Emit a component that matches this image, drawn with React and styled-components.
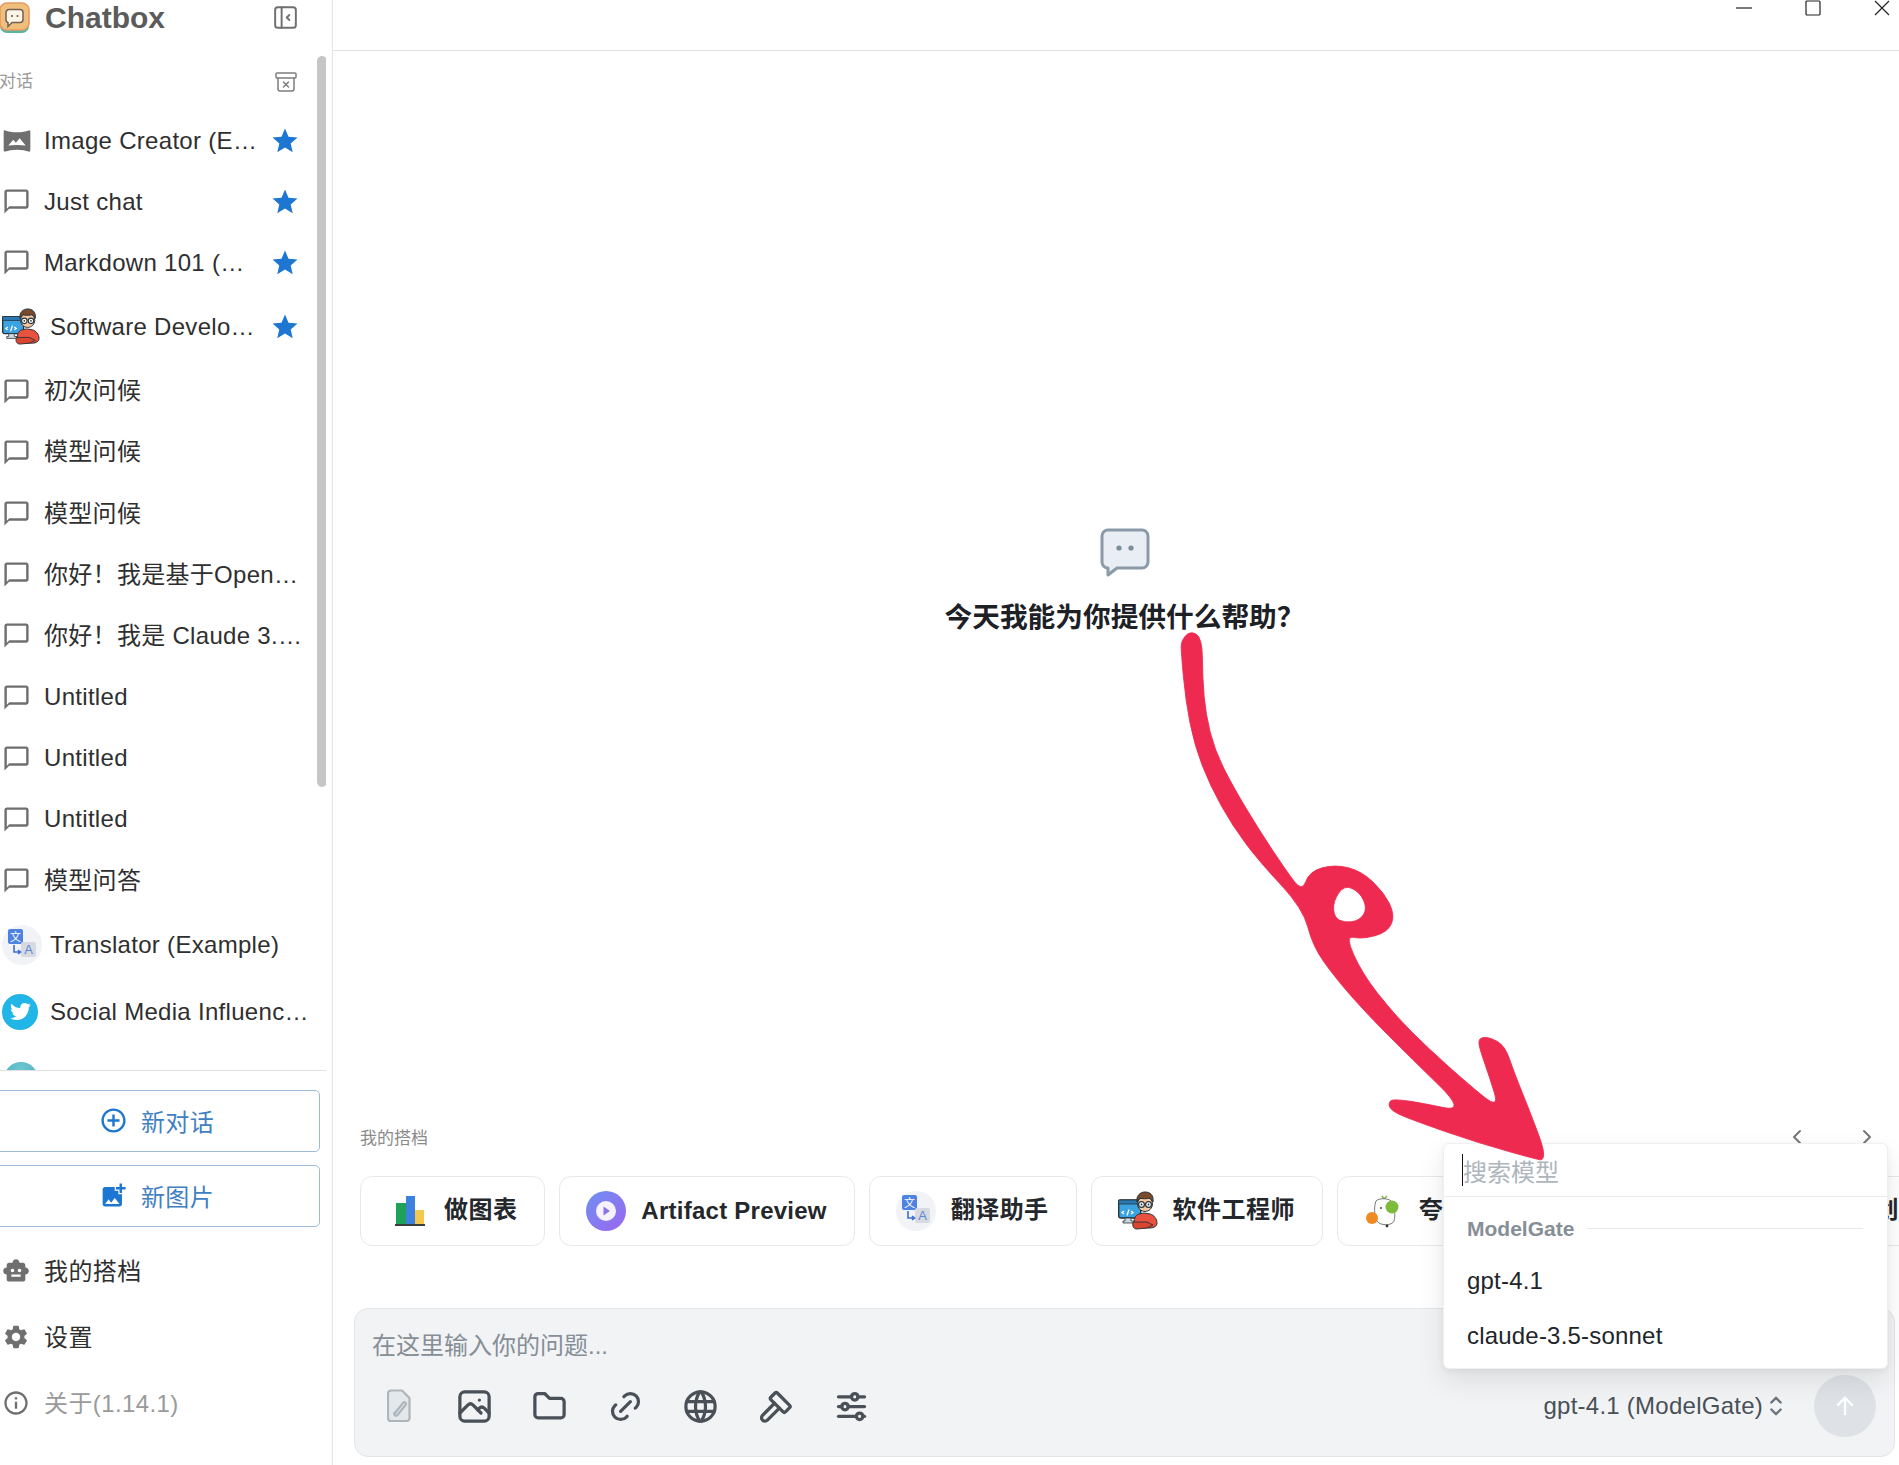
import React from 'react';
import styled, { createGlobalStyle } from 'styled-components';
import { MdOutlineChatBubbleOutline, MdStar, MdVrpano, MdSmartToy, MdSettings, MdInfoOutline, MdAddCircleOutline, MdAddPhotoAlternate } from 'react-icons/md';
import { TbLayoutSidebarLeftCollapse, TbPhoto, TbFolder, TbLink, TbWorld, TbHammer, TbAdjustmentsHorizontal, TbSelector, TbArrowUp, TbChevronLeft, TbChevronRight } from 'react-icons/tb';
import { FaTwitter } from 'react-icons/fa';
import { ArchiveX } from 'lucide-react';

const FONT = '"Liberation Sans", "Noto Sans CJK SC", sans-serif';

const Global = createGlobalStyle`
  html, body { margin: 0; padding: 0; background: #fff; }
  body { font-family: ${FONT}; overflow: hidden; }
  * { box-sizing: border-box; }
`;

const Page = styled.div`
  position: relative;
  display: flex;
  width: 1899px;
  height: 1465px;
  overflow: hidden;
  background: #fff;
`;

/* ---------- Sidebar ---------- */
const Sidebar = styled.aside`
  flex: 0 0 333px;
  height: 100%;
  display: flex;
  flex-direction: column;
  border-right: 1px solid #e3e3e3;
`;
const Brand = styled.header`
  flex: 0 0 56px;
  display: flex;
  align-items: flex-start;
  padding-top: 2px;
`;
const BrandName = styled.h1`
  margin: -3px 0 0 15px;
  font-size: 30px;
  line-height: 37px;
  font-weight: 700;
  color: #5b5b5b;
`;
const CollapseButton = styled.span`
  margin: 0 0 0 auto;
  padding-right: 31px;
  color: #6f6f6f;
  display: flex;
  font-size: 31px;
  svg { stroke-width: 1.5; }
`;
const Scroller = styled.div`
  position: relative;
  flex: 1;
  min-height: 0;
  overflow: hidden;
  margin-right: 6px;
`;
const ScrollThumb = styled.div`
  position: absolute;
  top: 0;
  left: 317px;
  width: 10px;
  height: 731px;
  border-radius: 5px;
  background: #c6c6c6;
`;
const SectionHead = styled.div`
  height: 54px;
  display: flex;
  align-items: flex-start;
  justify-content: space-between;
  padding: 14px 29px 0 0;
  margin-left: -1px;
`;
const SectionLabel = styled.span`
  font-size: 17px;
  line-height: 24px;
  color: #9a9a9a;
`;
const ArchiveIcon = styled(ArchiveX)`
  width: 24px;
  height: 24px;
  color: #7d7d7d;
  margin-right: -1px;
`;
const SessionList = styled.ul`
  list-style: none;
  margin: 0;
  padding: 0;
`;
const Session = styled.li`
  display: flex;
  align-items: center;
  height: ${p => (p.$avatar ? '67px' : '61.2px')};
  width: ${p => (p.$avatar ? '312px' : '306px')};
  margin-left: 2px;
`;
const SessionIconBox = styled.span`
  flex: 0 0 ${p => (p.$avatar ? '48px' : '42px')};
  display: flex;
  align-items: center;
  font-size: ${p => (p.$wide ? '32px' : '29px')};
  margin-left: ${p => (p.$wide ? '-1px' : '0')};
  margin-right: ${p => (p.$wide ? '1px' : '0')};
  color: #6f6f6f;
`;
const SessionTitle = styled.span`
  flex: 1;
  min-width: 0;
  font-size: 24px;
  line-height: 30px;
  letter-spacing: 0.3px;
  color: #2f2f2f;
  white-space: nowrap;
  overflow: hidden;
  text-overflow: ellipsis;
`;
const StarIcon = styled(MdStar)`
  flex: 0 0 30px;
  width: 30px;
  height: 30px;
  margin: 0 ${p => (p.$wide ? '14px' : '8px')} 0 10px;
  color: #1c76d2;
`;
const SidebarFoot = styled.div`
  flex: 0 0 auto;
  height: 395px;
  border-top: 1px solid #e0e0e0;
  margin-right: 6px;
  padding-top: 19px;
`;
const ActionStack = styled.div`
  display: flex;
  flex-direction: column;
  gap: 13px;
  margin: 0 0 9px -7px;
`;
const ActionButton = styled.button`
  display: flex;
  align-items: center;
  justify-content: center;
  gap: 13px;
  width: 327px;
  height: 62px;
  padding: 0 0 2px;
  background: #fff;
  border: 1px solid #9bbbd8;
  border-radius: 5px;
  font-family: ${FONT};
  font-size: 24px;
  letter-spacing: 0.3px;
  color: #3f80c2;
  svg { font-size: 29px; color: #1c76d2; }
`;
const NavItem = styled.div`
  display: flex;
  align-items: center;
  height: 66px;
  margin-left: 2px;
  font-size: 24px;
  letter-spacing: 0.4px;
  color: ${p => (p.$muted ? '#9a9a9a' : '#2f2f2f')};
  svg { flex: 0 0 28px; width: 28px; height: 28px; color: #6f6f6f; margin-right: 14px; margin-top: 3px; }
`;

/* ---------- Main ---------- */
const Main = styled.main`
  flex: 1;
  min-width: 0;
  display: flex;
  flex-direction: column;
  height: 100%;
`;
const TitleBar = styled.div`
  flex: 0 0 51px;
  border-bottom: 1px solid #e2e2e2;
  display: flex;
  justify-content: flex-end;
  align-items: flex-start;
  padding-right: 9px;
  gap: 53px;
`;
const WinButton = styled.svg`
  width: 16px;
  height: 16px;
  display: block;
  fill: none;
  stroke: #222;
  stroke-width: 1.2;
`;
const Hero = styled.section`
  flex: 1;
  display: flex;
  flex-direction: column;
  align-items: center;
  padding-top: 477px;
`;
const HeroIcon = styled.svg`
  width: 50px;
  height: 49px;
  margin-left: 17px;
`;
const HeroTitle = styled.h2`
  margin: 21px 0 0 17px;
  font-size: 27.7px;
  line-height: 40px;
  font-weight: 700;
  color: #1d2125;
`;
const Personas = styled.section`
  flex: 0 0 auto;
  padding-left: 27px;
`;
const PersonasHead = styled.div`
  display: flex;
  align-items: center;
  justify-content: space-between;
  height: 24px;
  padding-right: 20px;
  font-size: 17px;
  color: #8b8b8b;
`;
const Pager = styled.div`
  display: flex;
  gap: 46px;
  font-size: 24px;
  color: #777;
  margin-top: 2px;
  svg { display: block; }
`;
const CardRow = styled.div`
  display: flex;
  gap: 14px;
  margin-top: 28px;
  overflow: hidden;
`;
const Card = styled.div`
  flex: 0 0 auto;
  display: flex;
  align-items: center;
  gap: 15px;
  height: 70px;
  padding: 0 27px 0 ${p => p.$pad || 26}px;
  border: 1px solid #e7e8ea;
  border-radius: 12px;
  background: #fff;
`;
const CardName = styled.span`
  font-size: 24px;
  line-height: 30px;
  font-weight: 700;
  letter-spacing: ${p => (p.$latin ? '0.25px' : '0.45px')};
  color: #24272b;
  white-space: nowrap;
  padding-bottom: ${p => (p.$latin ? '0' : '2px')};
`;
const Composer = styled.section`
  flex: 0 0 149px;
  margin: 62px 4px 8px 21px;
  padding: 21px 18px 19px 17px;
  display: flex;
  flex-direction: column;
  background: #f1f3f5;
  border: 1px solid #e3e5e8;
  border-radius: 14px;
`;
const Placeholder = styled.div`
  font-size: 24px;
  line-height: 32px;
  color: #868e96;
`;
const ToolRow = styled.div`
  display: flex;
  align-items: center;
  margin-top: auto;
`;
const ToolGroup = styled.div`
  display: flex;
  align-items: center;
  padding-left: 12px;
  gap: 45.4px;
`;
const Tool = styled.span`
  display: flex;
  width: 30px;
  height: 32px;
  align-items: center;
  justify-content: center;
  font-size: 39px;
  color: ${p => (p.$disabled ? '#adb5bd' : '#495057')};
  svg { flex: none; }
`;
const ModelPicker = styled.div`
  margin-left: auto;
  display: flex;
  align-items: center;
  font-size: 24px;
  letter-spacing: 0.25px;
  color: #495057;
  svg { font-size: 28px; margin-left: -1px; color: #6b737b; }
`;
const SendButton = styled.span`
  flex: 0 0 62px;
  height: 62px;
  margin-left: 24px;
  border-radius: 50%;
  background: #dee2e6;
  color: #fff;
  display: flex;
  align-items: center;
  justify-content: center;
  font-size: 28px;
`;

/* ---------- Popover ---------- */
const Popover = styled.div`
  position: absolute;
  left: 1443px;
  top: 1143px;
  width: 445px;
  height: 226px;
  background: #fff;
  border: 1px solid #eff0f1;
  border-radius: 6px;
  box-shadow: 0 12px 28px rgba(0, 0, 0, 0.09), 0 2px 6px rgba(0, 0, 0, 0.05);
  z-index: 5;
`;
const SearchRow = styled.div`
  display: flex;
  align-items: flex-start;
  height: 53px;
  padding-left: 18px;
  border-bottom: 1px solid #e9ecef;
`;
const Caret = styled.span`
  flex: 0 0 1px;
  height: 32px;
  margin-top: 10px;
  background: #111;
`;
const SearchHint = styled.span`
  margin-top: 13px;
  font-size: 24px;
  line-height: 32px;
  color: #adb5bd;
`;
const GroupLabel = styled.div`
  display: flex;
  align-items: center;
  gap: 13px;
  margin: 17px 24px 10px 23px;
  height: 30px;
  font-size: 21px;
  font-weight: 700;
  color: #868e96;
  &::after { content: ''; flex: 1; height: 1px; background: #e6e8ea; margin-top: -2px; }
`;
const ModelItem = styled.div`
  height: 54.5px;
  padding-left: 23px;
  display: flex;
  align-items: center;
  font-size: 24px;
  letter-spacing: 0.2px;
  color: #212529;
`;
const ArrowArt = styled.svg`
  position: absolute;
  left: 920px;
  top: 500px;
  width: 700px;
  height: 700px;
  pointer-events: none;
  z-index: 6;
  fill: #ef2a50;
  stroke: #ef2a50;
  stroke-width: 2;
`;

/* ---------- Drawn avatars ---------- */
const Logo = () => (
  <svg width="30" height="31" viewBox="0 0 30 31">
    <rect x="0" y="4" width="29" height="27" rx="7" fill="#57b5a0" />
    <rect x="0" y="1" width="29" height="27" rx="7" fill="#f1bf7c" stroke="#e69b62" strokeWidth="1.6" />
    <path d="M9 7.5h11a3 3 0 0 1 3 3v7a3 3 0 0 1-3 3h-8l-4 4v-4a3 3 0 0 1-2-3v-7a3 3 0 0 1 3-3z" fill="#fff5e6" stroke="#6e6256" strokeWidth="1.5" />
    <circle cx="12" cy="14" r="1.1" fill="#6e6256" />
    <circle cx="17.5" cy="14" r="1.1" fill="#6e6256" />
  </svg>
);
const DevAvatar = ({ size = 40 }) => (
  <svg width={size} height={size} viewBox="0 0 40 40">
    <rect x="0.7" y="9" width="22" height="18" rx="2" fill="#3aa3e0" stroke="#27323a" strokeWidth="1.4" />
    <rect x="0.7" y="9" width="22" height="4" fill="#2a78b4" stroke="#27323a" strokeWidth="0.8" />
    <path d="M6 20l-2 1.5L6 23M11 18.5l-2 6M13 20l2 1.5-2 1.5" stroke="#fff" strokeWidth="1.3" fill="none" />
    <path d="M7 27h6v3h3v2H5v-2h2z" fill="#cfd8dc" stroke="#27323a" strokeWidth="0.8" />
    <path d="M17 34c-2-5 0-10 4-11l5-1 6 1c4 1 7 5 7 9 0 3-3 5-7 5H22c-2 0-4-1-5-3z" fill="#e8523f" stroke="#27323a" strokeWidth="1" />
    <path d="M15 31h14l6 3-6 3-10 1c-3 0-5-2-4-7z" fill="#d9452f" stroke="#27323a" strokeWidth="0.9" />
    <circle cx="27" cy="13" r="7.5" fill="#f6c9a2" stroke="#27323a" strokeWidth="1" />
    <path d="M19 11c-1-6 3-10 8-10s9 3 8 10c-1-2-2-3-3-4-3 1-8 1-10 0-1 1-2 2-3 4z" fill="#7a4a2b" stroke="#27323a" strokeWidth="1" />
    <circle cx="23.5" cy="13.5" r="2.9" fill="#fff" stroke="#27323a" strokeWidth="1.2" />
    <circle cx="30.5" cy="13.5" r="2.9" fill="#fff" stroke="#27323a" strokeWidth="1.2" />
    <circle cx="23.5" cy="13.5" r="0.9" fill="#27323a" />
    <circle cx="30.5" cy="13.5" r="0.9" fill="#27323a" />
  </svg>
);
const TranslatorAvatar = () => (
  <svg width="40" height="40" viewBox="0 0 40 40">
    <circle cx="20" cy="20" r="20" fill="#f1f3f6" />
    <rect x="6" y="4" width="15" height="15" rx="2" fill="#4f83e3" />
    <text x="13.5" y="15.5" fontSize="11" fill="#fff" textAnchor="middle" fontFamily={FONT}>文</text>
    <rect x="19" y="17" width="15" height="15" rx="2" fill="#d7dae0" />
    <text x="26.5" y="29" fontSize="13" fill="#5b86d8" textAnchor="middle" fontFamily={FONT}>A</text>
    <path d="M12 20v7h6M16 25l2.5 2-2.5 2" fill="none" stroke="#3c6fd1" strokeWidth="1.6" />
  </svg>
);
const TwitterAvatar = styled.span`
  width: 36px;
  height: 36px;
  border-radius: 50%;
  background: #22b5e8;
  color: #fff;
  font-size: 21px;
  display: flex;
  align-items: center;
  justify-content: center;
`;
const GlobeAvatar = styled.span`
  width: 34px;
  height: 34px;
  border-radius: 50%;
  margin-left: 2px;
  background: radial-gradient(circle at 50% 20%, #6cc7cf, #3c9fc0);
`;
const ChartAvatar = () => (
  <svg width="40" height="40" viewBox="0 0 40 40">
    <rect x="7" y="12" width="10" height="21" fill="#1fa15a" />
    <rect x="17" y="5" width="9" height="28" fill="#3c80e0" />
    <rect x="26" y="19" width="9" height="14" fill="#f4c84d" />
    <rect x="6" y="33" width="30" height="2" fill="#37403f" />
  </svg>
);
const ArtifactAvatar = () => (
  <svg width="40" height="40" viewBox="0 0 40 40">
    <defs>
      <linearGradient id="artg" x1="0" y1="0" x2="1" y2="1">
        <stop offset="0" stopColor="#6f90f3" />
        <stop offset="1" stopColor="#9a66ee" />
      </linearGradient>
    </defs>
    <circle cx="20" cy="20" r="20" fill="url(#artg)" />
    <circle cx="20" cy="20" r="10" fill="#f6f2ff" />
    <path d="M17.5 15.5l6.5 4.5-6.5 4.5z" fill="#8a74e8" />
  </svg>
);
const HamsterAvatar = () => (
  <svg width="40" height="40" viewBox="0 0 40 40">
    <path d="M20 8l-2-3M20 8l3-3" stroke="#83b34a" strokeWidth="1.4" fill="none" />
    <path d="M12 10c3-3 12-3 15 0 3 4 5 14 3 20-2 5-14 5-17 0-3-6-3-15-1-20z" fill="#fff" stroke="#555" strokeWidth="0.8" />
    <circle cx="8" cy="27" r="6" fill="#f28a24" />
    <circle cx="28" cy="16" r="6.5" fill="#7cbb3c" />
    <circle cx="17" cy="17" r="0.9" fill="#333" />
    <circle cx="23" cy="35" r="1.4" fill="#333" />
  </svg>
);
const FileClip = () => (
  <svg width="24" height="34" viewBox="0 0 24 34" fill="none" stroke="#adb5bd" strokeWidth="2.2" strokeLinejoin="round" strokeLinecap="round">
    <path d="M4 1.5h11l7.5 7.5v20a3 3 0 0 1-3 3H4a3 3 0 0 1-3-3v-24.5a3 3 0 0 1 3-3z" fill="#e4e8eb" />
    <path d="M8 24l8-10c1.5-2 4 0 2.5 2l-8 10c-1.5 1.5-4 0-3-2" />
  </svg>
);

/* Hand-drawn arrow: outline points, smoothed through their midpoints */
const smooth = pts => {
  const mid = (a, b) => [(a[0] + b[0]) / 2, (a[1] + b[1]) / 2];
  const start = mid(pts[pts.length - 1], pts[0]);
  let d = `M${start[0]} ${start[1]}`;
  pts.forEach((p, i) => {
    const m = mid(p, pts[(i + 1) % pts.length]);
    d += `Q${p[0]} ${p[1]} ${m[0]} ${m[1]}`;
  });
  return d + 'Z';
};
const arrowOutline = [
  [585, 315], [605, 293], [632, 308], [633, 400], [640, 480], [660, 560], [700, 640], [760, 740], [820, 830], [856, 878],
  [872, 832], [930, 816], [990, 832], [1040, 880], [1064, 930], [1048, 968], [990, 984], [952, 975],
  [990, 1060], [1060, 1150], [1140, 1230], [1230, 1310], [1298, 1365], [1275, 1290], [1252, 1225], [1252, 1205], [1275, 1203], [1310, 1222],
  [1330, 1280], [1370, 1380], [1398, 1455], [1396, 1478], [1385, 1478], [1250, 1440], [1120, 1395], [1052, 1368], [1050, 1345], [1070, 1343], [1120, 1350], [1225, 1372],
  [1100, 1250], [1000, 1150], [930, 1070], [880, 1000], [858, 915], [760, 810], [700, 730], [650, 640], [615, 550], [595, 450], [585, 340],
];
const arrowHole = [[925, 900], [950, 862], [985, 878], [1002, 915], [985, 942], [950, 947], [928, 935]];

const sessions = [
  { t: 'Image Creator (Example)', star: true, icon: <MdVrpano />, wide: true },
  { t: 'Just chat', star: true },
  { t: 'Markdown 101 (Example)', star: true },
  { t: 'Software Developer (Example)', star: true, avatar: <DevAvatar size={38} /> },
  { t: '初次问候' },
  { t: '模型问候' },
  { t: '模型问候' },
  { t: '你好！我是基于OpenAI的模型' },
  { t: '你好！我是 Claude 3.5 Sonnet' },
  { t: 'Untitled' },
  { t: 'Untitled' },
  { t: 'Untitled' },
  { t: '模型问答' },
  { t: 'Translator (Example)', avatar: <TranslatorAvatar /> },
  { t: 'Social Media Influencer (Example)', avatar: <TwitterAvatar><FaTwitter /></TwitterAvatar> },
  { t: 'Travel Guide (Example)', avatar: <GlobeAvatar /> },
];

const cards = [
  { n: '做图表', a: <ChartAvatar />, pad: 28 },
  { n: 'Artifact Preview', a: <ArtifactAvatar />, latin: true },
  { n: '翻译助手', a: <TranslatorAvatar /> },
  { n: '软件工程师', a: <DevAvatar /> },
  { n: '夸夸机', a: <HamsterAvatar /> },
  { n: '周报生成器', a: <ChartAvatar /> },
  { n: '创意写作', a: <ArtifactAvatar />, pad: 38 },
];

export default function App() {
  return (
    <Page>
      <Global />
      <Sidebar>
        <Brand>
          <Logo />
          <BrandName>Chatbox</BrandName>
          <CollapseButton><TbLayoutSidebarLeftCollapse /></CollapseButton>
        </Brand>
        <Scroller>
          <SectionHead>
            <SectionLabel>对话</SectionLabel>
            <ArchiveIcon strokeWidth={1.5} />
          </SectionHead>
          <SessionList>
            {sessions.map((s, i) => (
              <Session key={i} $avatar={!!s.avatar}>
                <SessionIconBox $avatar={!!s.avatar} $wide={s.wide}>
                  {s.avatar || s.icon || <MdOutlineChatBubbleOutline />}
                </SessionIconBox>
                <SessionTitle>{s.t}</SessionTitle>
                {s.star && <StarIcon $wide={!!s.avatar} />}
              </Session>
            ))}
          </SessionList>
          <ScrollThumb />
        </Scroller>
        <SidebarFoot>
          <ActionStack>
            <ActionButton><MdAddCircleOutline />新对话</ActionButton>
            <ActionButton><MdAddPhotoAlternate />新图片</ActionButton>
          </ActionStack>
          <NavItem><MdSmartToy />我的搭档</NavItem>
          <NavItem><MdSettings />设置</NavItem>
          <NavItem $muted><MdInfoOutline />关于(1.14.1)</NavItem>
        </SidebarFoot>
      </Sidebar>

      <Main>
        <TitleBar>
          <WinButton viewBox="0 0 16 16"><path d="M0 8h16" /></WinButton>
          <WinButton viewBox="0 0 16 16"><rect x="1" y="1" width="14" height="14" rx="1" /></WinButton>
          <WinButton viewBox="0 0 16 16"><path d="M1 1l14 14M15 1L1 15" /></WinButton>
        </TitleBar>
        <Hero>
          <HeroIcon viewBox="0 0 50 49">
            <path d="M8 2h34a6 6 0 0 1 6 6v26a6 6 0 0 1-6 6H17L8 47v-7a6 6 0 0 1-6-6V8a6 6 0 0 1 6-6z" fill="#e9eef4" stroke="#8a9aa8" strokeWidth="3" strokeLinejoin="round" />
            <circle cx="19" cy="20" r="2.6" fill="#7d8c99" />
            <circle cx="31" cy="20" r="2.6" fill="#7d8c99" />
          </HeroIcon>
          <HeroTitle>今天我能为你提供什么帮助？</HeroTitle>
        </Hero>
        <Personas>
          <PersonasHead>
            <span>我的搭档</span>
            <Pager><TbChevronLeft /><TbChevronRight /></Pager>
          </PersonasHead>
          <CardRow>
            {cards.map(c => (
              <Card key={c.n} $pad={c.pad}>
                {c.a}
                <CardName $latin={c.latin}>{c.n}</CardName>
              </Card>
            ))}
          </CardRow>
        </Personas>
        <Composer>
          <Placeholder>在这里输入你的问题...</Placeholder>
          <ToolRow>
            <ToolGroup>
              <Tool $disabled><FileClip /></Tool>
              <Tool><TbPhoto /></Tool>
              <Tool><TbFolder /></Tool>
              <Tool><TbLink /></Tool>
              <Tool><TbWorld /></Tool>
              <Tool><TbHammer /></Tool>
              <Tool><TbAdjustmentsHorizontal /></Tool>
            </ToolGroup>
            <ModelPicker>gpt-4.1 (ModelGate)<TbSelector /></ModelPicker>
            <SendButton><TbArrowUp /></SendButton>
          </ToolRow>
        </Composer>
      </Main>

      <Popover>
        <SearchRow><Caret /><SearchHint>搜索模型</SearchHint></SearchRow>
        <GroupLabel>ModelGate</GroupLabel>
        <ModelItem>gpt-4.1</ModelItem>
        <ModelItem>claude-3.5-sonnet</ModelItem>
      </Popover>

      <ArrowArt viewBox="0 0 1568 1568">
        <path fillRule="evenodd" d={smooth(arrowOutline) + smooth(arrowHole)} />
      </ArrowArt>
    </Page>
  );
}
